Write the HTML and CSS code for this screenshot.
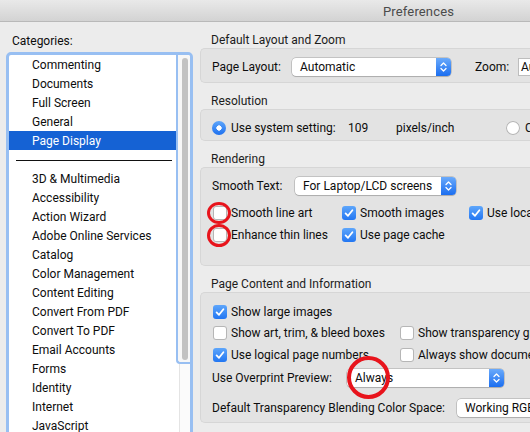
FILE: index.html
```html
<!DOCTYPE html>
<html lang="en">
<head>
<meta charset="utf-8">
<title>Preferences</title>
<link rel="stylesheet" href="styles.css">
</head>
<body>
<div class="window">
  <header class="titlebar"><span class="title">Preferences</span></header>
  <div class="main">
    <aside class="sidebar">
      <div class="cat-label">Categories:</div>
      <div class="listbox">
        <ul class="list">
          <li>Commenting</li>
          <li>Documents</li>
          <li>Full Screen</li>
          <li>General</li>
          <li class="selected">Page Display</li>
          <li class="sep"></li>
          <li>3D &amp; Multimedia</li>
          <li>Accessibility</li>
          <li>Action Wizard</li>
          <li>Adobe Online Services</li>
          <li>Catalog</li>
          <li>Color Management</li>
          <li>Content Editing</li>
          <li>Convert From PDF</li>
          <li>Convert To PDF</li>
          <li>Email Accounts</li>
          <li>Forms</li>
          <li>Identity</li>
          <li>Internet</li>
          <li>JavaScript</li>
        </ul>
        <div class="scroller">
          <div class="track"><div class="thumb"></div></div>
          <div class="track-rest"></div>
        </div>
      </div>
    </aside>

    <section class="content">
      <div class="group">
        <h2 class="group-title">Default Layout and Zoom</h2>
        <div class="box box-layout">
          <div class="row">
            <span class="lbl w-pagelayout">Page Layout:</span>
            <div class="popup w-layout">
              <span class="popup-text">Automatic</span>
              <span class="popup-arrows"><svg width="9" height="14" viewBox="0 0 9 14"><polyline points="2,5.5 4.5,3 7,5.5"/><polyline points="2,8.5 4.5,11 7,8.5"/></svg></span>
            </div>
            <span class="lbl w-zoom">Zoom:</span>
            <div class="field">Automatic</div>
          </div>
        </div>
      </div>

      <div class="group">
        <h2 class="group-title">Resolution</h2>
        <div class="box box-res">
          <div class="row">
            <span class="radio on"></span>
            <span class="lbl w-sys">Use system setting:</span>
            <span class="lbl w-109">109</span>
            <span class="lbl w-ppi">pixels/inch</span>
            <span class="radio"></span>
            <span class="lbl">Custom setting:</span>
          </div>
        </div>
      </div>

      <div class="group">
        <h2 class="group-title">Rendering</h2>
        <div class="box box-render">
          <div class="row">
            <span class="lbl w-smooth">Smooth Text:</span>
            <div class="popup w-smoothsel">
              <span class="popup-text">For Laptop/LCD screens</span>
              <span class="popup-arrows"><svg width="9" height="14" viewBox="0 0 9 14"><polyline points="2,5.5 4.5,3 7,5.5"/><polyline points="2,8.5 4.5,11 7,8.5"/></svg></span>
            </div>
          </div>
          <div class="checks checks-render">
            <label class="check"><span class="cb"></span>Smooth line art</label>
            <label class="check"><span class="cb on"><svg width="14" height="14" viewBox="0 0 14 14"><polyline points="3.6,7.4 6,9.8 10.4,4.2"/></svg></span>Smooth images</label>
            <label class="check"><span class="cb on"><svg width="14" height="14" viewBox="0 0 14 14"><polyline points="3.6,7.4 6,9.8 10.4,4.2"/></svg></span>Use local fonts</label>
            <label class="check"><span class="cb"></span>Enhance thin lines</label>
            <label class="check"><span class="cb on"><svg width="14" height="14" viewBox="0 0 14 14"><polyline points="3.6,7.4 6,9.8 10.4,4.2"/></svg></span>Use page cache</label>
          </div>
        </div>
      </div>

      <div class="group">
        <h2 class="group-title">Page Content and Information</h2>
        <div class="box box-page">
          <div class="checks checks-page">
            <label class="check"><span class="cb on"><svg width="14" height="14" viewBox="0 0 14 14"><polyline points="3.6,7.4 6,9.8 10.4,4.2"/></svg></span>Show large images</label>
            <span></span>
            <label class="check"><span class="cb"></span>Show art, trim, &amp; bleed boxes</label>
            <label class="check"><span class="cb"></span>Show transparency grid</label>
            <label class="check"><span class="cb on"><svg width="14" height="14" viewBox="0 0 14 14"><polyline points="3.6,7.4 6,9.8 10.4,4.2"/></svg></span>Use logical page numbers</label>
            <label class="check"><span class="cb"></span>Always show document page size</label>
          </div>
          <div class="row row-overprint">
            <span class="lbl w-overprint">Use Overprint Preview:</span>
            <div class="popup w-always">
              <span class="popup-text">Always</span>
              <span class="popup-arrows"><svg width="9" height="14" viewBox="0 0 9 14"><polyline points="2,5.5 4.5,3 7,5.5"/><polyline points="2,8.5 4.5,11 7,8.5"/></svg></span>
            </div>
          </div>
          <div class="row row-blend">
            <span class="lbl w-blend">Default Transparency Blending Color Space:</span>
            <div class="popup w-rgb">
              <span class="popup-text">Working RGB</span>
              <span class="popup-arrows"><svg width="9" height="14" viewBox="0 0 9 14"><polyline points="2,5.5 4.5,3 7,5.5"/><polyline points="2,8.5 4.5,11 7,8.5"/></svg></span>
            </div>
          </div>
        </div>
      </div>
    </section>
  </div>

  <div class="mark mark-1"></div>
  <div class="mark mark-2"></div>
  <div class="mark mark-3"></div>
</div>
</body>
</html>
```

FILE: styles.css
```css
* { box-sizing: border-box; }

html, body {
  margin: 0;
  padding: 0;
  width: 530px;
  height: 432px;
  overflow: hidden;
  background: #ececec;
}

body {
  font-family: Roboto, "Liberation Sans", sans-serif;
  font-size: 12px;
  color: #0d0d0d;
}

.window {
  position: relative;
  width: 530px;
  height: 432px;
  overflow: hidden;
}

/* Title bar */
.titlebar {
  height: 22px;
  border-bottom: 1px solid #b9b9b9;
  background: linear-gradient(#e9e9e9, #d3d3d3);
  display: flex;
  align-items: center;
  padding-left: 383px;
}
.title {
  font-size: 13px;
  letter-spacing: 0.15px;
  color: #4b4b4b;
  line-height: 21px;
  padding-top: 1px;
}

.main {
  display: flex;
  align-items: flex-start;
}

/* Sidebar */
.sidebar {
  flex: 0 0 200px;
  padding-left: 6px;
}
.cat-label {
  padding: 12px 0 0 6px;
  line-height: 15px;
  height: 30px;
}
.listbox {
  width: 187px;
  height: 400px;
  border: 3px solid #98bff2;
  border-radius: 5px;
  background: #fff;
  display: flex;
  overflow: hidden;
}
.list {
  list-style: none;
  margin: 0;
  padding: 0;
  width: 167px;
  flex: 0 0 167px;
}
.list li {
  height: 19px;
  line-height: 20px;
  padding-left: 23px;
  white-space: nowrap;
  color: #0d0d0d;
}
.list li.selected {
  background: #1562d4;
  color: #fff;
}
.list li.sep {
  position: relative;
}
.list li.sep::after {
  content: "";
  position: absolute;
  left: 7px;
  right: 4px;
  top: 10px;
  height: 1px;
  background: #111;
}
.scroller {
  flex: 1;
  display: flex;
  flex-direction: column;
}
.track {
  height: 309px;
  border-left: 2px solid #98bff2;
  border-bottom: 2px solid #98bff2;
  border-bottom-left-radius: 4px;
  background: #f7f7f7;
  padding: 3px 0 0 4px;
}
.thumb {
  width: 6px;
  height: 302px;
  border-radius: 3px;
  background: #c2c2c2;
}
.track-rest {
  flex: 1;
  margin-left: 3px;
  border-left: 1px solid #e4e4e4;
  background: #fbfbfb;
}

/* Content */
.content {
  flex: 0 0 360px;
  padding-top: 11px;
  display: flex;
  flex-direction: column;
  gap: 11px;
}
.group-title {
  margin: 0;
  padding-left: 11px;
  font-size: 12px;
  font-weight: normal;
  line-height: 15px;
  color: #1c1c1c;
}
.box {
  background: #e3e3e3;
  border: 1px solid #d6d6d6;
  border-right: none;
  border-radius: 5px 0 0 5px;
  padding-left: 11px;
}
.box-layout { height: 35px; padding-top: 9px; }
.box-res { height: 32px; padding-top: 9px; }
.box-render { height: 99px; padding-top: 9px; }
.box-page { height: 131px; padding-top: 8px; }

.row {
  display: flex;
  align-items: center;
  height: 18px;
  white-space: nowrap;
}
.lbl { flex: 0 0 auto; white-space: nowrap; }
.w-pagelayout { width: 80px; }
.w-zoom { width: 43px; margin-left: 24px; }
.w-sys { width: 117px; margin-left: 5px; }
.w-109 { width: 48px; }
.w-ppi { width: 110px; }
.w-smooth { width: 83px; }
.w-overprint { width: 135px; }
.w-blend { width: 245px; }

/* Popup buttons */
.popup {
  flex: 0 0 auto;
  display: flex;
  height: 18px;
  background: #fff;
  border-radius: 4px;
  box-shadow: 0 0 0 0.5px rgba(0,0,0,0.28), 0 1px 1px rgba(0,0,0,0.12);
}
.popup-text {
  flex: 1;
  padding-left: 8px;
  line-height: 18px;
  color: #0d0d0d;
  white-space: nowrap;
}
.popup-arrows {
  flex: 0 0 15px;
  display: flex;
  align-items: center;
  justify-content: center;
  background: linear-gradient(#6aaafb, #1b6ef0);
  border-radius: 0 4px 4px 0;
}
.popup-arrows svg polyline {
  fill: none;
  stroke: #fff;
  stroke-width: 1.3;
  stroke-linecap: round;
  stroke-linejoin: round;
}
.w-layout { width: 159px; }
.w-smoothsel { width: 161px; }
.w-always { width: 157px; }
.w-rgb { width: 120px; }

.field {
  flex: 0 0 80px;
  height: 18px;
  background: #fff;
  border: 1px solid #bdbdbd;
  border-right: none;
  padding-left: 2px;
  line-height: 16px;
}

/* Radios */
.radio {
  flex: 0 0 14px;
  width: 14px;
  height: 14px;
  border-radius: 50%;
  background: #fff;
  box-shadow: inset 0 0 0 1px #b4b4b4;
}
.radio.on {
  background: radial-gradient(circle, #fff 0 2.4px, transparent 2.9px), linear-gradient(#5ea6fb, #1d70ef);
  box-shadow: none;
}
.radio + .lbl { margin-left: 5px; }

/* Checkboxes */
.checks {
  display: grid;
  margin-left: 1px;
  white-space: nowrap;
}
.checks-render {
  grid-template-columns: 129px 127px 120px;
  grid-auto-rows: 22px;
  margin-top: 7px;
}
.checks-page {
  grid-template-columns: 187px 200px;
  grid-auto-rows: 21.5px;
}
.check {
  display: flex;
  align-items: center;
  gap: 4px;
}
.cb {
  flex: 0 0 14px;
  width: 14px;
  height: 14px;
  border-radius: 3px;
  background: #fff;
  box-shadow: inset 0 0 0 1px #b6b6b6;
}
.cb.on {
  background: linear-gradient(#5ea6fb, #2276f2);
  box-shadow: none;
}
.cb svg { display: block; }
.cb svg polyline {
  fill: none;
  stroke: #fff;
  stroke-width: 1.8;
  stroke-linecap: round;
  stroke-linejoin: round;
}

.row-overprint { margin-top: 3.5px; }
.row-blend { margin-top: 12px; }

/* Red annotation circles */
.mark {
  position: absolute;
  border: 3px solid #e8141c;
  border-radius: 50%;
}
.mark-1 { left: 207px; top: 201.5px; width: 24px; height: 22px; }
.mark-2 { left: 207px; top: 224px; width: 24px; height: 23px; }
.mark-3 { left: 347px; top: 356px; width: 43px; height: 43px; border-width: 4px; }
```
